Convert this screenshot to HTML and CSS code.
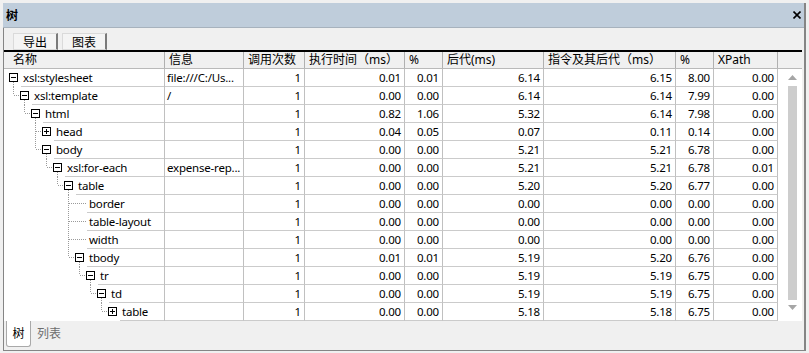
FILE: index.html
```html
<!DOCTYPE html>
<html lang="zh">
<head>
<meta charset="utf-8">
<title>树</title>
<link rel="stylesheet" href="styles.css">
</head>
<body>
<div class="window">
  <div class="titlebar">
    <span class="title">树</span>
    <svg class="close" width="8" height="8" viewBox="0 0 8 8"><path d="M0.5 0.5L7.5 7.5M7.5 0.5L0.5 7.5" stroke="#000" stroke-width="1.6" fill="none"/></svg>
  </div>
  <div class="panel">
    <div class="toolbar">
      <button class="tbtn">导出</button>
      <button class="tbtn">图表</button>
    </div>
    <div class="grid">
      <div class="hdr cols">
        <div class="hc hc-name">名称</div>
        <div class="hc">信息</div>
        <div class="hc">调用次数</div>
        <div class="hc">执行时间（ms）</div>
        <div class="hc">%</div>
        <div class="hc">后代(ms)</div>
        <div class="hc">指令及其后代（ms）</div>
        <div class="hc">%</div>
        <div class="hc">XPath</div>
        <div class="hc hc-fill"></div>
      </div>
      <div class="gbody">
        <div class="rows">
          <div class="row cols">
            <div class="name"><svg class="gut" width="17" height="18"><path d="M9.5 13V18" class="dot"/><rect x="5.5" y="4.5" width="8" height="8" class="box"/><path d="M7 8.5H12" class="sign"/></svg><span class="lbl">xsl:stylesheet</span></div>
            <div class="c txt">file:///C:/Us...</div><div class="c num">1</div><div class="c num">0.01</div><div class="c num">0.01</div><div class="c num">6.14</div><div class="c num">6.15</div><div class="c num">8.00</div><div class="c num">0.00</div>
          </div>
          <div class="row cols">
            <div class="name"><svg class="gut" width="28" height="18"><path d="M9.5 0V8M10 8.5H16M20.5 13V18" class="dot"/><rect x="16.5" y="4.5" width="8" height="8" class="box"/><path d="M18 8.5H23" class="sign"/></svg><span class="lbl">xsl:template</span></div>
            <div class="c txt">/</div><div class="c num">1</div><div class="c num">0.00</div><div class="c num">0.00</div><div class="c num">6.14</div><div class="c num">6.14</div><div class="c num">7.99</div><div class="c num">0.00</div>
          </div>
          <div class="row cols">
            <div class="name"><svg class="gut" width="39" height="18"><path d="M20.5 0V8M21 8.5H27M31.5 13V18" class="dot"/><rect x="27.5" y="4.5" width="8" height="8" class="box"/><path d="M29 8.5H34" class="sign"/></svg><span class="lbl">html</span></div>
            <div class="c txt"></div><div class="c num">1</div><div class="c num">0.82</div><div class="c num">1.06</div><div class="c num">5.32</div><div class="c num">6.14</div><div class="c num">7.98</div><div class="c num">0.00</div>
          </div>
          <div class="row cols">
            <div class="name"><svg class="gut" width="50" height="18"><path d="M31.5 0V18M32 8.5H38" class="dot"/><rect x="38.5" y="4.5" width="8" height="8" class="box"/><path d="M40 8.5H45M42.5 6V11" class="sign"/></svg><span class="lbl">head</span></div>
            <div class="c txt"></div><div class="c num">1</div><div class="c num">0.04</div><div class="c num">0.05</div><div class="c num">0.07</div><div class="c num">0.11</div><div class="c num">0.14</div><div class="c num">0.00</div>
          </div>
          <div class="row cols">
            <div class="name"><svg class="gut" width="50" height="18"><path d="M31.5 0V8M32 8.5H38M42.5 13V18" class="dot"/><rect x="38.5" y="4.5" width="8" height="8" class="box"/><path d="M40 8.5H45" class="sign"/></svg><span class="lbl">body</span></div>
            <div class="c txt"></div><div class="c num">1</div><div class="c num">0.00</div><div class="c num">0.00</div><div class="c num">5.21</div><div class="c num">5.21</div><div class="c num">6.78</div><div class="c num">0.00</div>
          </div>
          <div class="row cols">
            <div class="name"><svg class="gut" width="61" height="18"><path d="M42.5 0V8M43 8.5H49M53.5 13V18" class="dot"/><rect x="49.5" y="4.5" width="8" height="8" class="box"/><path d="M51 8.5H56" class="sign"/></svg><span class="lbl">xsl:for-each</span></div>
            <div class="c txt">expense-rep...</div><div class="c num">1</div><div class="c num">0.00</div><div class="c num">0.00</div><div class="c num">5.21</div><div class="c num">5.21</div><div class="c num">6.78</div><div class="c num">0.01</div>
          </div>
          <div class="row cols">
            <div class="name"><svg class="gut" width="72" height="18"><path d="M53.5 0V8M54 8.5H60M64.5 13V18" class="dot"/><rect x="60.5" y="4.5" width="8" height="8" class="box"/><path d="M62 8.5H67" class="sign"/></svg><span class="lbl">table</span></div>
            <div class="c txt"></div><div class="c num">1</div><div class="c num">0.00</div><div class="c num">0.00</div><div class="c num">5.20</div><div class="c num">5.20</div><div class="c num">6.77</div><div class="c num">0.00</div>
          </div>
          <div class="row cols">
            <div class="name"><svg class="gut" width="83" height="18"><path d="M64.5 0V18M65 8.5H83" class="dot"/></svg><span class="lbl">border</span></div>
            <div class="c txt"></div><div class="c num">1</div><div class="c num">0.00</div><div class="c num">0.00</div><div class="c num">0.00</div><div class="c num">0.00</div><div class="c num">0.00</div><div class="c num">0.00</div>
          </div>
          <div class="row cols">
            <div class="name"><svg class="gut" width="83" height="18"><path d="M64.5 0V18M65 8.5H83" class="dot"/></svg><span class="lbl">table-layout</span></div>
            <div class="c txt"></div><div class="c num">1</div><div class="c num">0.00</div><div class="c num">0.00</div><div class="c num">0.00</div><div class="c num">0.00</div><div class="c num">0.00</div><div class="c num">0.00</div>
          </div>
          <div class="row cols">
            <div class="name"><svg class="gut" width="83" height="18"><path d="M64.5 0V18M65 8.5H83" class="dot"/></svg><span class="lbl">width</span></div>
            <div class="c txt"></div><div class="c num">1</div><div class="c num">0.00</div><div class="c num">0.00</div><div class="c num">0.00</div><div class="c num">0.00</div><div class="c num">0.00</div><div class="c num">0.00</div>
          </div>
          <div class="row cols">
            <div class="name"><svg class="gut" width="83" height="18"><path d="M64.5 0V8M65 8.5H71M75.5 13V18" class="dot"/><rect x="71.5" y="4.5" width="8" height="8" class="box"/><path d="M73 8.5H78" class="sign"/></svg><span class="lbl">tbody</span></div>
            <div class="c txt"></div><div class="c num">1</div><div class="c num">0.01</div><div class="c num">0.01</div><div class="c num">5.19</div><div class="c num">5.20</div><div class="c num">6.76</div><div class="c num">0.00</div>
          </div>
          <div class="row cols">
            <div class="name"><svg class="gut" width="94" height="18"><path d="M75.5 0V8M76 8.5H82M86.5 13V18" class="dot"/><rect x="82.5" y="4.5" width="8" height="8" class="box"/><path d="M84 8.5H89" class="sign"/></svg><span class="lbl">tr</span></div>
            <div class="c txt"></div><div class="c num">1</div><div class="c num">0.00</div><div class="c num">0.00</div><div class="c num">5.19</div><div class="c num">5.19</div><div class="c num">6.75</div><div class="c num">0.00</div>
          </div>
          <div class="row cols">
            <div class="name"><svg class="gut" width="105" height="18"><path d="M86.5 0V8M87 8.5H93M97.5 13V18" class="dot"/><rect x="93.5" y="4.5" width="8" height="8" class="box"/><path d="M95 8.5H100" class="sign"/></svg><span class="lbl">td</span></div>
            <div class="c txt"></div><div class="c num">1</div><div class="c num">0.00</div><div class="c num">0.00</div><div class="c num">5.19</div><div class="c num">5.19</div><div class="c num">6.75</div><div class="c num">0.00</div>
          </div>
          <div class="row cols">
            <div class="name"><svg class="gut" width="116" height="18"><path d="M97.5 0V8M98 8.5H104" class="dot"/><rect x="104.5" y="4.5" width="8" height="8" class="box"/><path d="M106 8.5H111M108.5 6V11" class="sign"/></svg><span class="lbl">table</span></div>
            <div class="c txt"></div><div class="c num">1</div><div class="c num">0.00</div><div class="c num">0.00</div><div class="c num">5.18</div><div class="c num">5.18</div><div class="c num">6.75</div><div class="c num">0.00</div>
          </div>
        </div>
        <div class="vscroll">
          <svg class="arr-up" width="9" height="5" viewBox="0 0 9 5"><path d="M4.5 0L9 5H0Z" fill="#a6a6a6"/></svg>
          <div class="thumb"></div>
          <svg class="arr-down" width="9" height="5" viewBox="0 0 9 5"><path d="M0 0H9L4.5 5Z" fill="#a6a6a6"/></svg>
        </div>
      </div>
    </div>
    <div class="tabs">
      <div class="tab tab-on">树</div>
      <div class="tab">列表</div>
    </div>
  </div>
</div>
</body>
</html>
```

FILE: styles.css
```css
* { box-sizing: border-box; }
html, body { margin: 0; padding: 0; }
body {
  width: 809px;
  height: 353px;
  overflow: hidden;
  background: #f0f0f0;
  padding: 3px 0 0 3px;
  font-family: "Segoe UI", "Noto Sans", "Noto Sans CJK SC", sans-serif;
  font-size: 12px;
  color: #000;
}
.window {
  width: 803px;
  height: 348px;
  border-right: 2px solid #858585;
  display: flex;
  flex-direction: column;
}
.titlebar {
  height: 25px;
  flex: none;
  background: #bfcddb;
  border-bottom: 1px solid #a7b2bd;
  display: flex;
  align-items: center;
  justify-content: space-between;
  padding: 0 3px 0 3px;
}
.title { font-weight: bold; line-height: 16px; font-family: "Noto Sans CJK SC", sans-serif; }
.close { display: block; }
.panel {
  flex: 1;
  border-left: 1px solid #858585;
  border-bottom: 1px solid #858585;
  display: flex;
  flex-direction: column;
}
.toolbar {
  height: 22px;
  flex: none;
  display: flex;
  gap: 4px;
  padding: 5px 0 0 9px;
}
.tbtn {
  width: 45px;
  height: 17px;
  margin: 0;
  padding: 0;
  background: #f4f4f4;
  border-top: 1px solid #dadada;
  border-left: 1px solid #dadada;
  border-right: 2px solid #7a7a7a;
  border-bottom: 1px solid #dadada;
  font-family: "Noto Sans CJK SC", sans-serif;
  font-size: 12px;
  line-height: 14px;
  color: #000;
}
.grid {
  width: 798px;
  flex: none;
  display: flex;
  flex-direction: column;
}
.cols {
  display: grid;
  grid-template-columns: 161px 79px 61px 100px 38px 101px 132px 38px 64px;
}
.hdr {
  grid-template-columns: 161px 79px 61px 100px 38px 101px 132px 38px 64px 1fr;
  height: 19px;
  border-top: 2px solid #000;
  border-bottom: 1px solid #b9b9b9;
  background: #f0f0f0;
}
.hc {
  border-right: 1px solid #b0b0b0;
  padding-left: 4px;
  line-height: 16px;
  white-space: nowrap;
  overflow: hidden;
}
.hc-name { padding-left: 9px; }
.hc-fill { border-right: none; }
.gbody {
  display: flex;
  height: 252px;
  background: #fff;
}
.rows { width: 774px; flex: none; }
.row {
  height: 18px;
  font-size: 11.5px;
  letter-spacing: -0.2px;
}
.name {
  display: flex;
  border-right: 1px solid #c0c0c0;
  min-width: 0;
}
.gut { display: block; flex: none; }
.dot { stroke: #9a9a9a; stroke-width: 1; stroke-dasharray: 1 1; fill: none; shape-rendering: crispEdges; }
.box { stroke: #000; stroke-width: 1; fill: #fff; shape-rendering: crispEdges; }
.sign { stroke: #000; stroke-width: 1; fill: none; shape-rendering: crispEdges; }
.lbl {
  flex: 1;
  min-width: 0;
  border-bottom: 1px solid #cbcbcb;
  padding-left: 2px;
  line-height: 17px;
  white-space: nowrap;
  overflow: hidden;
}
.c {
  border-right: 1px solid #c0c0c0;
  border-bottom: 1px solid #cbcbcb;
  line-height: 17px;
  white-space: nowrap;
  overflow: hidden;
}
.txt { padding-left: 2px; }
.num { text-align: right; padding-right: 3px; }
.vscroll {
  flex: 1;
  display: flex;
  flex-direction: column;
  align-items: flex-start;
  padding: 6px 0 0 10px;
}
.arr-up, .arr-down { display: block; flex: none; }
.thumb {
  width: 9px;
  height: 214px;
  margin: 6px 0 5px 0;
  background: #cdcdcd;
  flex: none;
}
.tabs {
  flex: 1;
  display: flex;
  align-items: flex-start;
  padding-left: 2px;
  font-family: "Noto Sans CJK SC", sans-serif;
}
.tab {
  height: 26px;
  line-height: 24px;
  padding: 0 6px;
  color: #6d6d6d;
}
.tab-on {
  width: 25px;
  padding: 0;
  text-align: center;
  color: #000;
  background: #fff;
  border: 1px solid #a9a9a9;
  border-top: none;
  border-radius: 0 0 3px 3px;
}
```
